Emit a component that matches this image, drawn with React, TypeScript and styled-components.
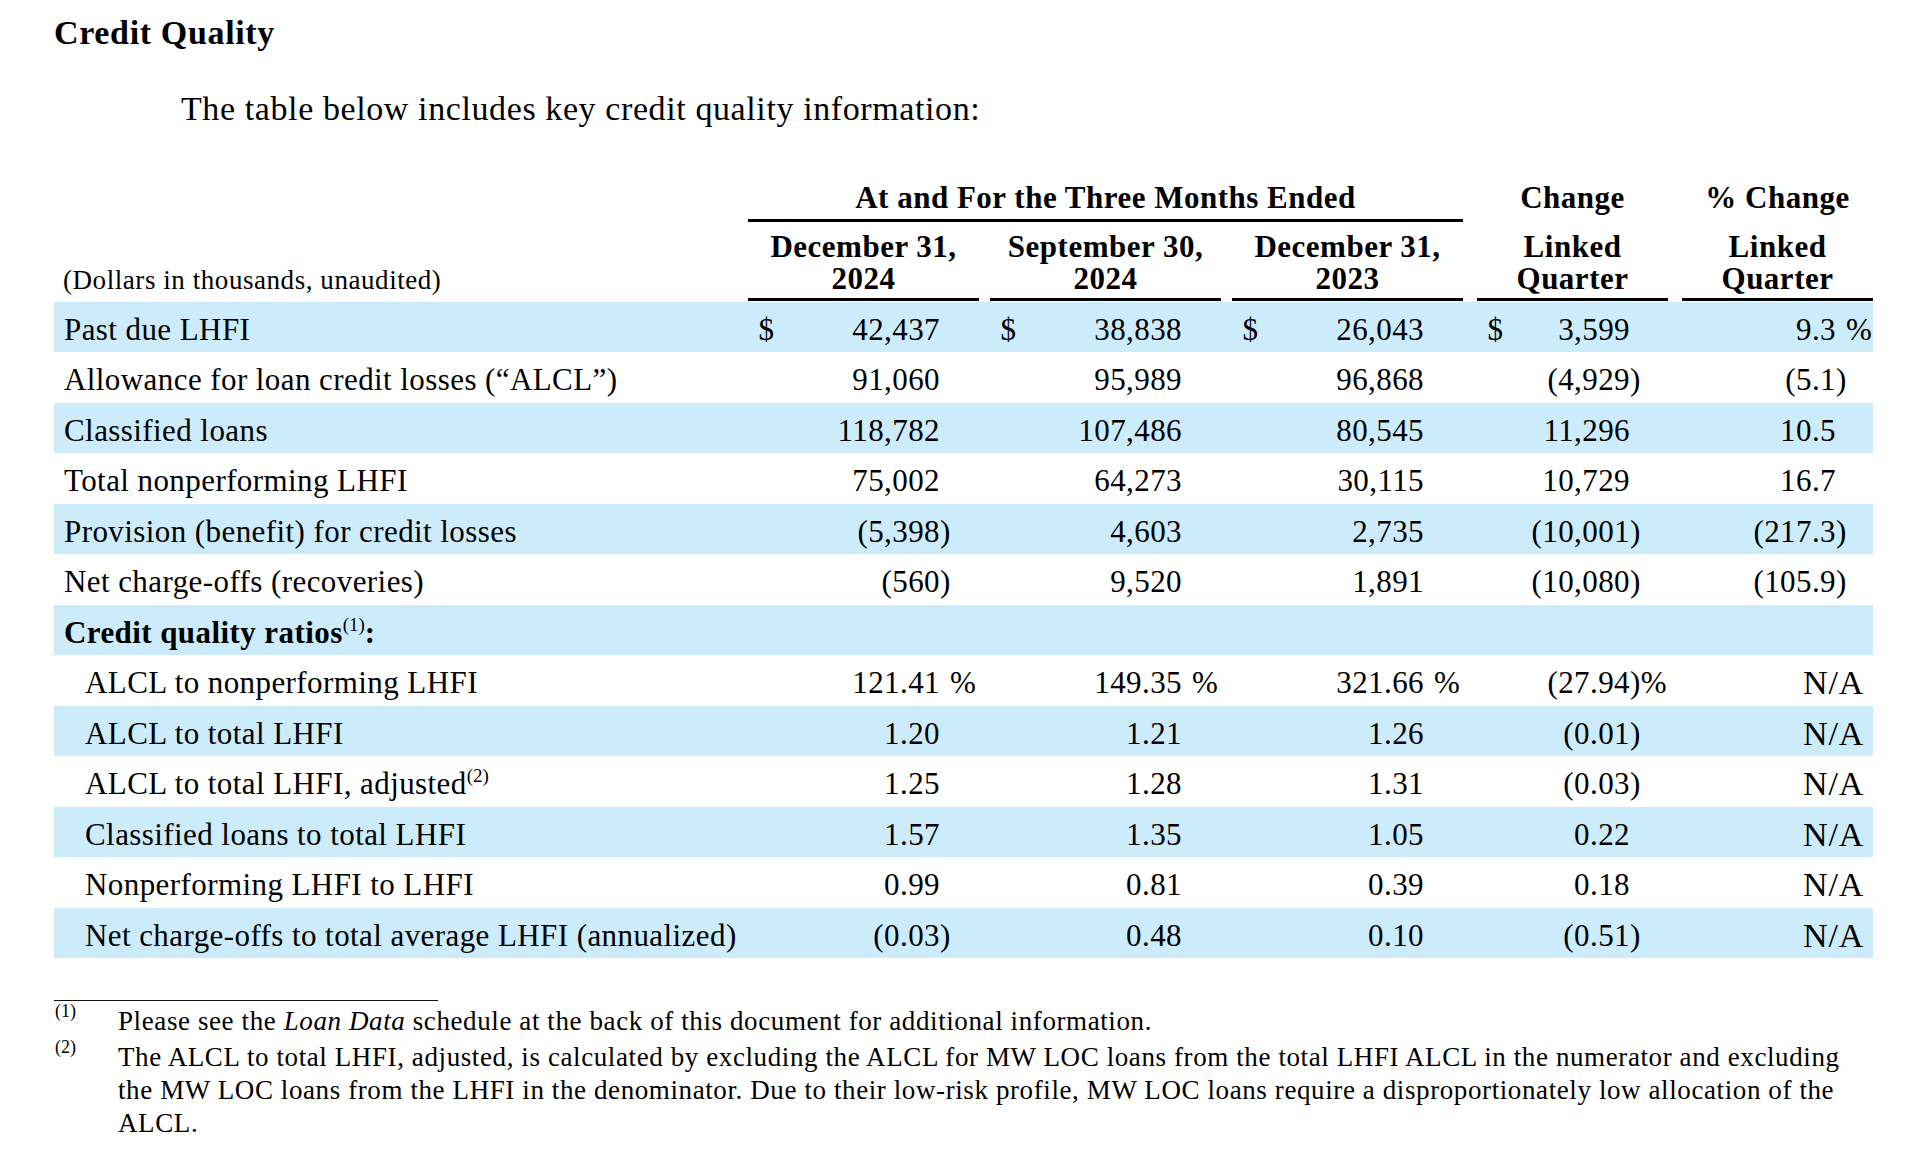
import React from "react";
import styled, { createGlobalStyle } from "styled-components";

const GlobalStyle = createGlobalStyle`
  html, body { margin: 0; padding: 0; background: #ffffff; }
  body {
    font-family: "Liberation Serif", "Times New Roman", Times, serif;
    color: #000000;
  }
  * { box-sizing: border-box; }
`;

const COLS = "694px 231px 242px 242px 205px 205px";
const PADS = [0, 0, 11, 11, 14, 14];
const SUFFIX = [39, 39, 39, 38, 37];
const SHADE = "#ccecfc";

const Page = styled.main`
  width: 1932px;
  padding: 13px 0 40px 54px;
`;

const Title = styled.h1`
  margin: 0;
  font-size: 34px;
  line-height: 40px;
  font-weight: 700;
  letter-spacing: 0.65px;
`;

const Intro = styled.p`
  margin: 35.5px 0 0 127px;
  font-size: 34px;
  line-height: 40px;
  letter-spacing: 0.6px;
`;

const Table = styled.section`
  width: 1819px;
  margin-top: 53.5px;
`;

const HeadGrid = styled.div`
  display: grid;
  grid-template-columns: ${COLS};
  align-items: end;
  row-gap: 9.5px;
  font-weight: 700;
  font-size: 31px;
  line-height: 32px;
  letter-spacing: 0.5px;
`;

const HeadCell = styled.div<{ $pad: number; $span?: string }>`
  grid-column: ${(p) => p.$span ?? "auto"};
  padding-left: ${(p) => p.$pad}px;
`;

const HeadBox = styled.div<{ $rule: boolean; $pb: number }>`
  text-align: center;
  padding-bottom: ${(p) => p.$pb}px;
  border-bottom: 3px solid ${(p) => (p.$rule ? "#000" : "transparent")};
`;

const UnitNote = styled.div`
  padding: 0 0 4.5px 9px;
  font-weight: 400;
  font-size: 27px;
  line-height: 32px;
  letter-spacing: 0.56px;
  text-align: left;
`;

const Body = styled.div`
  margin-top: 1px;
`;

const Row = styled.div<{ $shade: boolean }>`
  display: grid;
  grid-template-columns: ${COLS};
  height: 50.5px;
  align-items: center;
  background: ${(p) => (p.$shade ? SHADE : "#ffffff")};
  font-size: 31px;
  line-height: 34px;
  letter-spacing: 0.42px;
`;

const Label = styled.div<{ $indent: boolean; $bold: boolean }>`
  padding: 6px 0 0 ${(p) => (p.$indent ? 31 : 10)}px;
  font-weight: ${(p) => (p.$bold ? 700 : 400)};
  white-space: nowrap;
`;

const NumCell = styled.div<{ $pad: number }>`
  display: flex;
  align-items: baseline;
  padding: 6px 0 0 ${(p) => p.$pad}px;
  white-space: nowrap;
`;

const Dollar = styled.span`
  padding-left: 10.5px;
`;

const Num = styled.span`
  margin-left: auto;
  text-align: right;
`;

const Suffix = styled.span<{ $w: number }>`
  flex: none;
  width: ${(p) => p.$w}px;
  text-align: left;
`;

const Pct = styled.span`
  margin-left: 10px;
`;

const NotAvail = styled.span`
  margin-left: auto;
  padding-right: 9px;
  font-size: 34px;
  letter-spacing: 0.8px;
`;

const Sup = styled.sup`
  font-size: 19px;
  line-height: 0;
  vertical-align: 12px;
  letter-spacing: 0;
  font-weight: 400;
`;

const Notes = styled.footer`
  width: 1819px;
  margin-top: 41.5px;
  font-size: 27px;
  line-height: 33px;
  letter-spacing: 0.6px;
`;

const Rule = styled.hr`
  width: 384px;
  margin: 0 0 4px 0;
  border: 0;
  border-top: 1px solid #111;
`;

const Note = styled.div<{ $gap: number }>`
  display: grid;
  grid-template-columns: 64px 1fr;
  margin-top: ${(p) => p.$gap}px;
`;

const Marker = styled.span`
  padding: 0 0 0 1px;
  margin-top: -3px;
  font-size: 18px;
  line-height: 18px;
  letter-spacing: 0;
`;

const NoteText = styled.div`
  white-space: nowrap;
`;

type RowData = {
  label: React.ReactNode;
  indent?: boolean;
  bold?: boolean;
  dollar?: boolean;
  vals: string[];
};

const rows: RowData[] = [
  { label: "Past due LHFI", dollar: true, vals: ["42,437", "38,838", "26,043", "3,599", "9.3 %"] },
  { label: "Allowance for loan credit losses (\u201CALCL\u201D)", vals: ["91,060", "95,989", "96,868", "(4,929)", "(5.1)"] },
  { label: "Classified loans", vals: ["118,782", "107,486", "80,545", "11,296", "10.5"] },
  { label: "Total nonperforming LHFI", vals: ["75,002", "64,273", "30,115", "10,729", "16.7"] },
  { label: "Provision (benefit) for credit losses", vals: ["(5,398)", "4,603", "2,735", "(10,001)", "(217.3)"] },
  { label: "Net charge-offs (recoveries)", vals: ["(560)", "9,520", "1,891", "(10,080)", "(105.9)"] },
  {
    label: (
      <>
        Credit quality ratios<Sup>(1)</Sup>:
      </>
    ),
    bold: true,
    vals: ["", "", "", "", ""],
  },
  { label: "ALCL to nonperforming LHFI", indent: true, vals: ["121.41 %", "149.35 %", "321.66 %", "(27.94)%", "N/A"] },
  { label: "ALCL to total LHFI", indent: true, vals: ["1.20", "1.21", "1.26", "(0.01)", "N/A"] },
  {
    label: (
      <>
        ALCL to total LHFI, adjusted<Sup>(2)</Sup>
      </>
    ),
    indent: true,
    vals: ["1.25", "1.28", "1.31", "(0.03)", "N/A"],
  },
  { label: "Classified loans to total LHFI", indent: true, vals: ["1.57", "1.35", "1.05", "0.22", "N/A"] },
  { label: "Nonperforming LHFI to LHFI", indent: true, vals: ["0.99", "0.81", "0.39", "0.18", "N/A"] },
  { label: "Net charge-offs to total average LHFI (annualized)", indent: true, vals: ["(0.03)", "0.48", "0.10", "(0.51)", "N/A"] },
];

function renderSuffix(v: string): { n: string; s: React.ReactNode } {
  if (v.endsWith(")%")) return { n: v.slice(0, -2), s: ")%" };
  if (v.endsWith(" %")) return { n: v.slice(0, -2), s: <Pct>%</Pct> };
  if (v.endsWith(")")) return { n: v.slice(0, -1), s: ")" };
  return { n: v, s: "" };
}

const heads = [
  ["December 31,", "2024"],
  ["September 30,", "2024"],
  ["December 31,", "2023"],
  ["Linked", "Quarter"],
  ["Linked", "Quarter"],
];

export default function App() {
  return (
    <>
      <GlobalStyle />
      <Page>
        <Title>Credit Quality</Title>
        <Intro>The table below includes key credit quality information:</Intro>

        <Table>
          <HeadGrid>
            <HeadCell $pad={0} />
            <HeadCell $pad={0} $span="2 / 5">
              <HeadBox $rule $pb={4.5}>At and For the Three Months Ended</HeadBox>
            </HeadCell>
            <HeadCell $pad={PADS[4]}>
              <HeadBox $rule={false} $pb={4.5}>Change</HeadBox>
            </HeadCell>
            <HeadCell $pad={PADS[5]}>
              <HeadBox $rule={false} $pb={4.5}>% Change</HeadBox>
            </HeadCell>

            <HeadCell $pad={0}>
              <UnitNote>(Dollars in thousands, unaudited)</UnitNote>
            </HeadCell>
            {heads.map((h, i) => (
              <HeadCell key={i} $pad={PADS[i + 1]}>
                <HeadBox $rule $pb={2.5}>
                  {h[0]}
                  <br />
                  {h[1]}
                </HeadBox>
              </HeadCell>
            ))}
          </HeadGrid>

          <Body>
            {rows.map((r, ri) => (
              <Row key={ri} $shade={ri % 2 === 0}>
                <Label $indent={!!r.indent} $bold={!!r.bold}>
                  {r.label}
                </Label>
                {r.vals.map((v, ci) => {
                  if (v === "N/A") {
                    return (
                      <NumCell key={ci} $pad={PADS[ci + 1]}>
                        <NotAvail>N/A</NotAvail>
                      </NumCell>
                    );
                  }
                  const { n, s } = renderSuffix(v);
                  const showDollar = !!r.dollar && ci < 4;
                  return (
                    <NumCell key={ci} $pad={PADS[ci + 1]}>
                      {showDollar && <Dollar>$</Dollar>}
                      <Num>{n}</Num>
                      <Suffix $w={SUFFIX[ci]}>{s}</Suffix>
                    </NumCell>
                  );
                })}
              </Row>
            ))}
          </Body>
        </Table>

        <Notes>
          <Rule />
          <Note $gap={0}>
            <Marker>(1)</Marker>
            <NoteText>
              Please see the <i>Loan Data</i> schedule at the back of this document for additional information.
            </NoteText>
          </Note>
          <Note $gap={3}>
            <Marker>(2)</Marker>
            <NoteText>
              The ALCL to total LHFI, adjusted, is calculated by excluding the ALCL for MW LOC loans from the total LHFI ALCL in the numerator and excluding
              <br />
              the MW LOC loans from the LHFI in the denominator. Due to their low-risk profile, MW LOC loans require a disproportionately low allocation of the
              <br />
              ALCL.
            </NoteText>
          </Note>
        </Notes>
      </Page>
    </>
  );
}
